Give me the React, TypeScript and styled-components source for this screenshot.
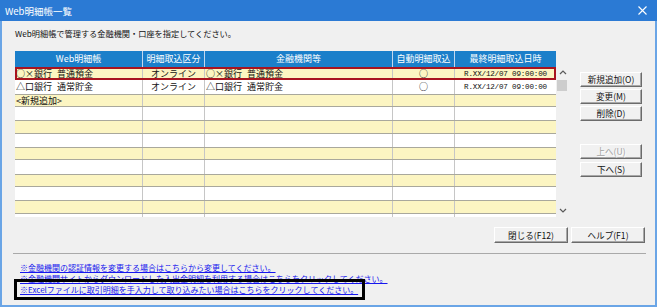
import React from 'react';
import styled, { createGlobalStyle } from 'styled-components';

const GlobalStyle = createGlobalStyle`
  html, body { margin: 0; padding: 0; background: #f0f0f0; }
  body { font-family: "Noto Sans CJK JP", "Noto Sans", sans-serif; }
`;

const COLS = '128px 62px 188px 62px 101px';

const Window = styled.div`
  width: 657px;
  height: 307px;
  box-sizing: border-box;
  display: flex;
  flex-direction: column;
  background: #6aa5e6;
  overflow: hidden;
`;

const TitleBar = styled.div`
  height: 21px;
  flex: none;
  display: flex;
  align-items: center;
  justify-content: space-between;
  padding: 0 10px 0 5px;
  background: #2b7ad4;
  color: #fff;
  font-size: 9.5px;
`;

const Body = styled.div`
  flex: 1;
  margin: 0 2px 2px 2px;
  background: #f0f0f0;
  display: flex;
  flex-direction: column;
  padding: 6px 10px 0 13px;
`;

const Instruction = styled.div`
  font-size: 8.2px;
  line-height: 12px;
  height: 12px;
  color: #111;
  white-space: nowrap;
`;

const Main = styled.div`
  display: flex;
  align-items: flex-start;
  margin-top: 12px;
`;

const TableWrap = styled.div`
  display: flex;
  flex-direction: column;
`;

const HeaderRow = styled.div`
  display: grid;
  grid-template-columns: ${COLS};
  width: 541px;
  height: 16px;
  background: #1b7fca;
  color: #fff;
  font-size: 9px;
`;

const HeaderCell = styled.div`
  line-height: 16px;
  text-align: center;
  white-space: nowrap;
  overflow: hidden;
  border-right: 1px solid #c4d8ee;
  &:last-child { border-right: none; }
`;

const BodyArea = styled.div`
  display: flex;
`;

const Rows = styled.div`
  width: 541px;
  height: 150px;
  overflow: hidden;
  background: #fff;
`;

const Row = styled.div<{ $yellow: boolean; $selected?: boolean }>`
  display: grid;
  grid-template-columns: ${COLS};
  height: 13.333px;
  box-sizing: border-box;
  background: ${(p) => (p.$yellow ? '#fcf5c2' : '#ffffff')};
  border-top: ${(p) => (p.$yellow ? '1px solid #a9a89c' : 'none')};
  border-bottom: ${(p) => (p.$yellow ? '1px solid #a9a89c' : 'none')};
  outline: ${(p) => (p.$selected ? '2px solid #a8141f' : 'none')};
  outline-offset: -2px;
  position: relative;
`;

const Cell = styled.div<{ $align?: 'left' | 'center'; $mono?: boolean }>`
  display: flex;
  align-items: center;
  justify-content: ${(p) => (p.$align === 'center' ? 'center' : 'flex-start')};
  padding-left: ${(p) => (p.$align === 'center' ? '0' : '1px')};
  border-right: 1px solid #c6c6c6;
  font-size: ${(p) => (p.$mono ? '7.6px' : '9px')};
  font-family: ${(p) => (p.$mono ? '"Liberation Mono", monospace' : 'inherit')};
  letter-spacing: ${(p) => (p.$mono ? '-0.2px' : '0')};
  word-spacing: ${(p) => (p.$mono ? '0' : '3px')};
  color: #111;
  white-space: nowrap;
  overflow: hidden;
  &:last-child { border-right: none; }
`;

const ScrollBar = styled.div`
  width: 13px;
  height: 150px;
  display: flex;
  flex-direction: column;
`;

const ArrowBox = styled.div<{ $h: number }>`
  height: ${(p) => p.$h}px;
  display: flex;
  align-items: center;
  justify-content: center;
`;

const Thumb = styled.div`
  width: 10px;
  height: 11px;
  margin: 3px 0 0 1px;
  background: #cdcdcd;
`;

const Spacer = styled.div`
  flex: 1;
`;

const SideButtons = styled.div`
  display: flex;
  flex-direction: column;
  margin-left: 11px;
  padding-top: 21px;
  width: 62px;
`;

const Btn = styled.button<{ $w: number; $h: number; $mt?: number }>`
  width: ${(p) => p.$w}px;
  height: ${(p) => p.$h}px;
  margin-top: ${(p) => p.$mt ?? 0}px;
  box-sizing: border-box;
  padding: 0;
  font-family: "Noto Sans CJK JP", sans-serif;
  font-size: 8.6px;
  line-height: 1;
  color: #111;
  background: #f1f1f1;
  border: 1px solid;
  border-color: #ffffff #6b6b6b #6b6b6b #ffffff;
  box-shadow: inset -1px -1px 0 #a8a8a8;
  white-space: nowrap;
  &:disabled {
    color: #a3a3a3;
    text-shadow: 1px 1px 0 #fff;
  }
`;

const BottomButtons = styled.div`
  display: flex;
  justify-content: flex-end;
  gap: 3px;
  margin-top: 10px;
`;

const Separator = styled.div`
  height: 1px;
  margin: 10px -1px 0 -2px;
  background: #a9a9a9;
`;

const Links = styled.div`
  margin-top: 8px;
  padding-left: 5px;
  display: flex;
  flex-direction: column;
  align-items: flex-start;
`;

const LinkLine = styled.a`
  display: block;
  font-size: 8px;
  line-height: 11px;
  height: 11px;
  color: #1616ee;
  text-decoration: underline;
  white-space: nowrap;
  cursor: pointer;
`;

const Highlighted = styled.div`
  position: relative;
  display: inline-block;
  &::after {
    content: '';
    position: absolute;
    top: -5px;
    bottom: -5px;
    left: -6px;
    right: -7px;
    border: 3px solid #000;
    pointer-events: none;
  }
`;

type RowData = [string, string, string, string, string];

const data: RowData[] = [
  ['○×銀行 普通預金', 'オンライン', '○×銀行 普通預金', '○', 'R.XX/12/07 09:00:00'],
  ['△口銀行 通常貯金', 'オンライン', '△口銀行 通常貯金', '○', 'R.XX/12/07 09:00:00'],
  ['<新規追加>', '', '', '', ''],
];

const rows: RowData[] = [...data];
while (rows.length < 12) rows.push(['', '', '', '', '']);

const headers = ['Web明細帳', '明細取込区分', '金融機関等', '自動明細取込', '最終明細取込日時'];

const Chevron = ({ up }: { up: boolean }) => (
  <svg width="8" height="6" viewBox="0 0 8 6">
    <polyline
      points={up ? '1,5 4,2 7,5' : '1,1 4,4 7,1'}
      fill="none"
      stroke="#5a5a5a"
      strokeWidth="1.2"
    />
  </svg>
);

const CloseIcon = () => (
  <svg width="9" height="9" viewBox="0 0 9 9">
    <path d="M0.5 0.5 L8.5 8.5 M8.5 0.5 L0.5 8.5" stroke="#fff" strokeWidth="1.1" />
  </svg>
);

export default function App() {
  return (
    <>
      <GlobalStyle />
      <Window>
        <TitleBar>
          <span>Web明細帳一覧</span>
          <CloseIcon />
        </TitleBar>
        <Body>
          <Instruction>Web明細帳で管理する金融機関・口座を指定してください。</Instruction>
          <Main>
            <TableWrap>
              <HeaderRow>
                {headers.map((h) => (
                  <HeaderCell key={h}>{h}</HeaderCell>
                ))}
              </HeaderRow>
              <BodyArea>
                <Rows>
                  {rows.map((r, i) => (
                    <Row key={i} $yellow={i % 2 === 0} $selected={i === 0}>
                      <Cell>{r[0]}</Cell>
                      <Cell $align="center">{r[1]}</Cell>
                      <Cell>{r[2]}</Cell>
                      <Cell $align="center">{r[3]}</Cell>
                      <Cell $align="center" $mono>{r[4]}</Cell>
                    </Row>
                  ))}
                </Rows>
                <ScrollBar>
                  <ArrowBox $h={10}>
                    <Chevron up />
                  </ArrowBox>
                  <Thumb />
                  <Spacer />
                  <ArrowBox $h={12}>
                    <Chevron up={false} />
                  </ArrowBox>
                </ScrollBar>
              </BodyArea>
            </TableWrap>
            <SideButtons>
              <Btn $w={62} $h={15}>新規追加(O)</Btn>
              <Btn $w={62} $h={15} $mt={2}>変更(M)</Btn>
              <Btn $w={62} $h={15} $mt={2}>削除(D)</Btn>
              <Btn $w={62} $h={15} $mt={23} disabled>上へ(U)</Btn>
              <Btn $w={62} $h={15} $mt={3}>下へ(S)</Btn>
            </SideButtons>
          </Main>
          <BottomButtons>
            <Btn $w={74} $h={16}>閉じる(F12)</Btn>
            <Btn $w={74} $h={16}>ヘルプ(F1)</Btn>
          </BottomButtons>
          <Separator />
          <Links>
            <LinkLine>※金融機関の認証情報を変更する場合はこちらから変更してください。</LinkLine>
            <LinkLine>※金融機関サイトからダウンロードした入出金明細を利用する場合はこちらをクリックしてください。</LinkLine>
            <Highlighted>
              <LinkLine>※Excelファイルに取引明細を手入力して取り込みたい場合はこちらをクリックしてください。</LinkLine>
            </Highlighted>
          </Links>
        </Body>
      </Window>
    </>
  );
}
